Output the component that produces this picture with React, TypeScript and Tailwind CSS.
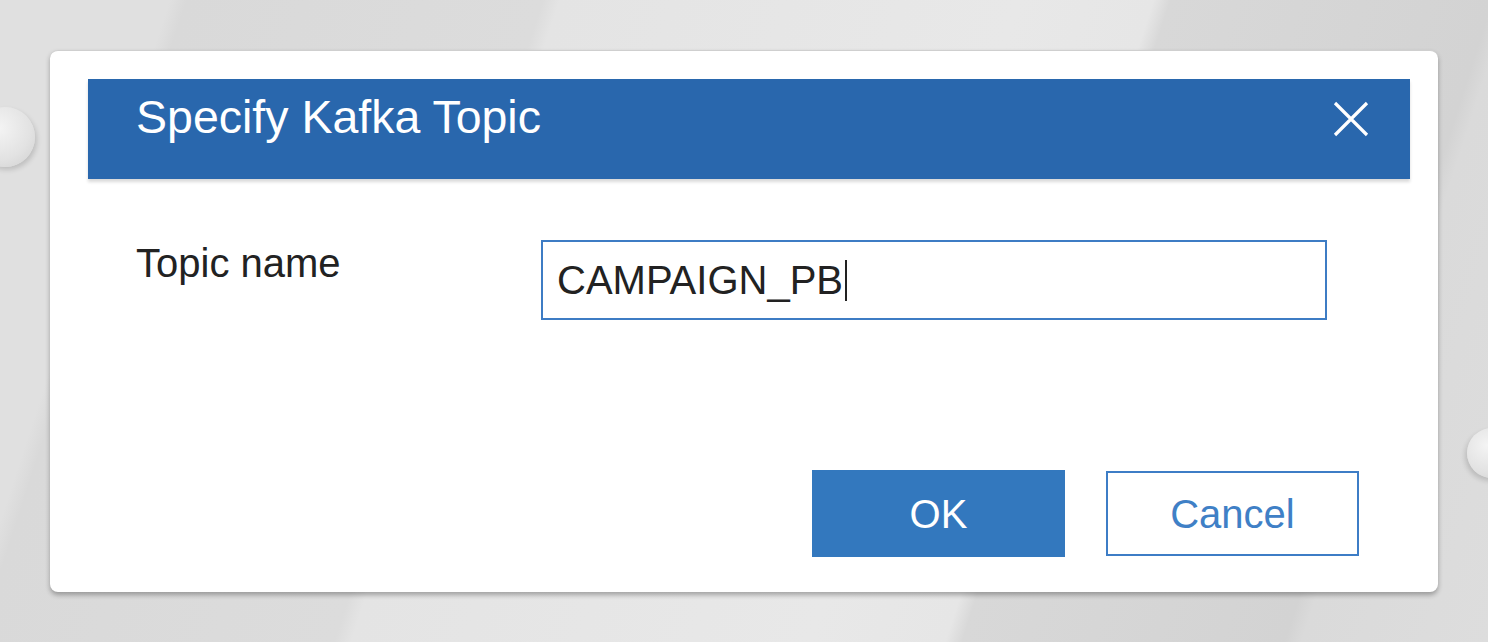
const font = { fontFamily: '"Liberation Sans", Arial, sans-serif' };

function CloseIcon() {
  return (
    <svg width="36" height="36" viewBox="0 0 36 36" fill="none" stroke="white" strokeWidth="3.2">
      <path d="M2 2L34 34M34 2L2 34" />
    </svg>
  );
}

export default function App() {
  return (
    <div
      className="relative h-[642px] w-full overflow-hidden bg-[linear-gradient(108deg,#e0e0e0_0%,#e0e0e0_10%,#d9d9d9_11%,#dcdcdc_32%,#e4e4e4_33%,#e8e8e8_60%,#e6e6e6_68%,#d8d8d8_69%,#d3d3d3_88%,#dadada_89%,#dddddd_100%)] pt-[50px] pl-[50px]"
      style={font}
    >
      {/* decorative knobs behind the dialog */}
      <div className="absolute left-[-25px] top-[107px] h-[60px] w-[60px] rounded-full bg-[radial-gradient(circle_at_40%_35%,#f4f4f4,#e2e2e2_60%,#cfcfcf)] shadow-[2px_3px_5px_rgba(0,0,0,0.15)]" />
      <div className="absolute left-[1467px] top-[428px] h-[50px] w-[50px] rounded-full bg-[radial-gradient(circle_at_40%_35%,#f4f4f4,#e2e2e2_60%,#cfcfcf)] shadow-[-2px_3px_5px_rgba(0,0,0,0.15)]" />

      {/* dialog */}
      <div className="relative flex h-[542px] w-[1388px] flex-col rounded-[8px] border-t border-[#cfcfcf] bg-white pt-[28px] pl-[38px] pr-[28px] shadow-[0_3px_5px_rgba(0,0,0,0.3)]">
        {/* header */}
        <div className="flex h-[100px] items-start justify-between bg-[#2967ad] shadow-[0_3px_3px_rgba(0,0,0,0.15)]">
          <h1 className="pl-[48px] pt-[15px] text-[46.5px] leading-[46px] text-white">Specify Kafka Topic</h1>
          <div className="mt-[22px] mr-[41px]">
            <CloseIcon />
          </div>
        </div>

        {/* body */}
        <div className="mt-[61px] flex items-start">
          <div className="mt-[3px] w-[453px] pl-[48px] text-[40px] leading-[40px] text-[#222222]">Topic name</div>
          <div className="flex h-[80px] w-[786px] items-center border-2 border-[#3d7cc4] pl-[14px]">
            <span className="text-[40px] leading-[40px] text-[#222222]">CAMPAIGN_PB</span>
            <span className="ml-[2px] h-[41px] w-[2px] bg-[#222222]" />
          </div>
        </div>

        {/* footer buttons */}
        <div className="mt-[150px] flex justify-end gap-[41px] pr-[51px]">
          <button className="h-[87px] w-[253px] bg-[#3378be] text-[40px] leading-[40px] text-white">OK</button>
          <button className="mt-[1px] h-[85px] w-[253px] border-2 border-[#3d7dc6] bg-white text-[40px] leading-[40px] text-[#3f80c6]">
            Cancel
          </button>
        </div>
      </div>
    </div>
  );
}
